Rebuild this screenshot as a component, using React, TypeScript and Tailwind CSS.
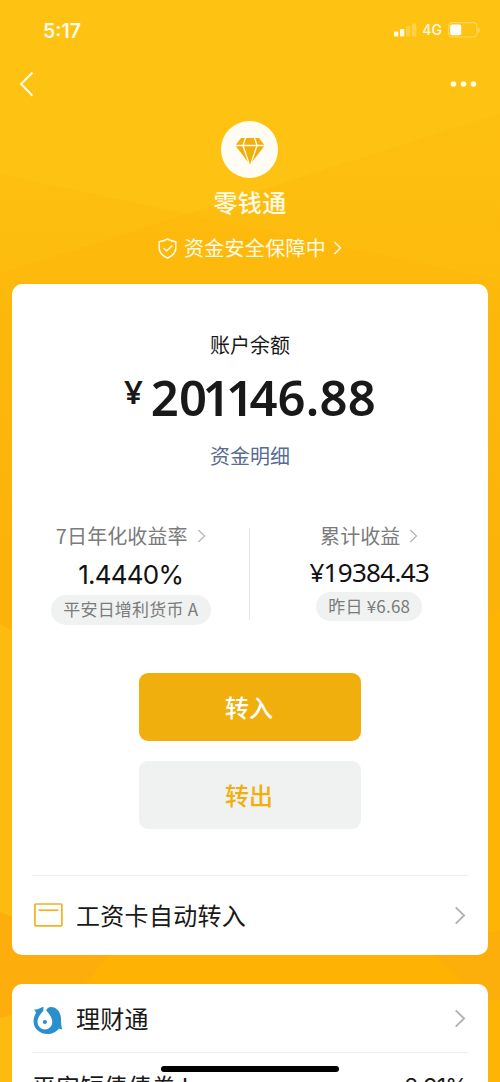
import { ReactNode } from 'react'

const cjk = "font-['Noto_Sans_CJK_SC',sans-serif]"
const num = "font-['Inter','Noto_Sans_CJK_SC',sans-serif]"
const money = "font-['Noto_Sans','Noto_Sans_CJK_SC',sans-serif]"

function Chevron({ className, width = 1.6 }: { className: string; width?: number }) {
  return (
    <svg className={className} viewBox="0 0 12 20" fill="none" stroke="currentColor" strokeWidth={width}>
      <path d="M1.5 1.5 10.3 10l-8.8 8.5" />
    </svg>
  )
}

function Background() {
  return (
    <svg className="absolute inset-0 h-full w-full" viewBox="0 0 500 1082" preserveAspectRatio="none">
      <defs>
        <linearGradient id="base" x1="0" y1="0" x2="0" y2="1">
          <stop offset="0" stopColor="#fec312" />
          <stop offset="0.15" stopColor="#fec312" />
          <stop offset="0.4" stopColor="#fdbd0f" />
          <stop offset="1" stopColor="#fdbc0e" />
        </linearGradient>
        <linearGradient id="fade" x1="0" y1="0" x2="0" y2="1">
          <stop offset="0" stopColor="#fcb60a" stopOpacity="0.28" />
          <stop offset="0.3" stopColor="#fcb409" stopOpacity="0.42" />
          <stop offset="1" stopColor="#fbb008" stopOpacity="0.6" />
        </linearGradient>
      </defs>
      <rect width="500" height="1082" fill="url(#base)" />
      <path d="M0 174 500 280V640H0Z" fill="url(#fade)" />
      <path d="M500 113 0 274V640H500Z" fill="url(#fade)" />
      <path d="M0 624 12 630V1082H0Z" fill="#fdbb10" />
      <path d="M500 610 480 625V1082H500Z" fill="#feb405" />
      <path d="M0 955H500V984H0Z" fill="#feb204" />
      <path d="M0 912 110 955 70 1000 0 1018Z" fill="#fdae0c" />
      <path d="M430 950 500 930V1000H480Z" fill="#fcae0b" />
    </svg>
  )
}

function StatusBar() {
  return (
    <div className={`flex h-[60px] items-center justify-between pl-[43px] pr-[20px] text-[#fffbe8] ${num}`}>
      <span className="pt-px text-[19.5px] font-semibold leading-6">5:17</span>
      <div className="flex items-center">
        <svg className="h-[14px] w-[23px]" viewBox="0 0 23 14" fill="currentColor">
          <rect x="0" y="8.5" width="4.3" height="5" rx="1" />
          <rect x="6" y="6" width="4.3" height="7.5" rx="1" />
          <rect x="12" y="3" width="4.3" height="10.5" rx="1" opacity="0.25" />
          <rect x="18" y="0.5" width="4.3" height="13" rx="1" opacity="0.25" />
        </svg>
        <span className="ml-[5px] text-[14px] font-medium leading-5">4G</span>
        <svg className="ml-[6px] h-[16px] w-[32px]" viewBox="0 0 32 16" fill="none">
          <rect x="0.6" y="0.6" width="28.4" height="14.4" rx="3.8" stroke="currentColor" strokeWidth="1.1" opacity="0.4" />
          <rect x="2.2" y="2.4" width="11" height="10.8" rx="1.8" fill="#fff" />
          <path d="M30.3 5.4c1.7.9 1.7 4.1 0 5Z" fill="currentColor" opacity="0.5" />
        </svg>
      </div>
    </div>
  )
}

function NavBar() {
  return (
    <div className="flex h-[48px] items-center justify-between pl-[19px] pr-[23px] text-[#fffbe8]">
      <svg className="h-[26px] w-[16px]" viewBox="0 0 16 26" fill="none" stroke="currentColor" strokeWidth="2">
        <path d="M13.6 1.5 2 13l11.6 11.7" />
      </svg>
      <svg className="h-[6px] w-[27px]" viewBox="0 0 27 6" fill="currentColor">
        <circle cx="3.5" cy="3" r="2.8" />
        <circle cx="13.5" cy="3" r="2.8" />
        <circle cx="23.5" cy="3" r="2.8" />
      </svg>
    </div>
  )
}

function Header() {
  return (
    <div className={`flex h-[176px] flex-col items-center pt-[13px] text-[#fffbe8] ${cjk}`}>
      <div className="mr-px flex h-[57px] w-[57px] items-center justify-center rounded-full bg-[#fffdf3]">
        <svg className="mt-[3px] h-[27px] w-[30px]" viewBox="0 0 30 27" fill="#efaf0c">
          <path d="M6 0H9.800L7.500 6.800H.8ZM11.200 0h7.600l2.300 6.800H8.900ZM20.200 0H24l5.200 6.800h-6.700ZM.8 8.200h6.700L13 24ZM8.900 8.200h12.200L15 26.500ZM22.500 8.200h6.700L17 24Z" />
        </svg>
      </div>
      <p className="mt-[9px] text-[24px] font-medium leading-[30px] tracking-[0.4px]">零钱通</p>
      <div className="mt-[17px] flex items-center">
        <svg className="h-[21px] w-[19px]" viewBox="0 0 19 21" fill="none" stroke="currentColor" strokeWidth="1.5">
          <path d="M9.5 1C12 2.4 14.5 3.3 17.8 3.7V10c0 5-3.500 8-8.300 10C4.700 18 1.200 15 1.200 10V3.700C4.500 3.300 7 2.400 9.500 1Z" strokeLinejoin="round" />
          <path d="m5.600 10 3 3 5.800-5.500" />
        </svg>
        <span className="ml-[7px] text-[20px] leading-[28px] tracking-[0.3px]">资金安全保障中</span>
        <Chevron className="ml-[7px] h-[14px] w-[9px]" width={2.2} />
      </div>
    </div>
  )
}

function Stat({ title, value, children }: { title: string; value: ReactNode; children: ReactNode }) {
  return (
    <div className="flex flex-1 flex-col items-center">
      <div className="flex h-[28px] items-center text-[#7b7b7b]">
        <span className="text-[20px] leading-[28px] tracking-[0.1px]">{title}</span>
        <Chevron className="ml-[9px] h-[14px] w-[9px] text-[#b5b5b5]" width={1.8} />
      </div>
      {value}
      {children}
    </div>
  )
}

function Row({ icon, text }: { icon: ReactNode; text: string }) {
  return (
    <div className="flex h-[68px] items-center pl-[1px] pr-[2px]">
      <div className="flex w-[43px] items-center">{icon}</div>
      <span className="flex-1 text-[24px] leading-[32px] tracking-[0.3px] text-[#191919]">{text}</span>
      <Chevron className="mt-px h-[19px] w-[12px] text-[#b2b2b2]" width={2} />
    </div>
  )
}

function CardIcon() {
  return (
    <svg className="h-[24px] w-[30px]" viewBox="0 0 30 24" fill="none" stroke="#f0b323" strokeWidth="1.7">
      <rect x="1.900" y="1" width="27" height="21.800" rx="1" />
      <path d="M5.500 7.200h19.800" />
    </svg>
  )
}

function FishIcon() {
  return (
    <svg className="mt-[4px] h-[29px] w-[30px]" viewBox="0 0 30 29" fill="#2a90cd">
      <path d="M1 3.500C4 4 6 2.500 10.500.7L10.300 5C7.500 8 4.500 11.500 4.500 16a7.400 7.400 0 0 0 14.800 0C19.300 12 16.500 8 13.500 5 13 2.500 16 1 18 1c6 0 10 5.500 10 12 0 4 .3 7 1.300 10.500l-3.300-1C23.500 26 19 28 14.500 28 6.500 28 .5 22.500.5 15c0-3 1-5.500 2.500-8C2.500 5.500 2 4.500 1 3.500Z" />
      <circle cx="11.900" cy="16" r="2.100" />
    </svg>
  )
}

export default function App() {
  return (
    <div className={`relative h-[1082px] w-[500px] overflow-hidden bg-[#fec312] ${cjk}`}>
      <Background />
      <div className="relative">
        <StatusBar />
        <NavBar />
        <Header />

        <div className="mx-[12px] h-[671px] rounded-[10px] bg-white px-[20px] pt-[47px]">
          <p className="text-center text-[20px] leading-[28px] text-[#191919]">账户余额</p>
          <div className={`mt-[8px] flex h-[58px] justify-center text-[#191919] ${money}`}>
            <span className="mr-[8px] mt-[3px] text-[33px] font-semibold leading-[44px]">¥</span>
            <span className="text-[49px] font-semibold leading-[60px] tracking-[0.2px]">
              2<span className="tracking-[-4.6px]">011</span>46.88
            </span>
          </div>
          <p className="mt-[17px] text-center text-[20px] leading-[28px] text-[#576b95]">资金明细</p>

          <div className="-mx-[20px] mt-[52px] flex h-[110px]">
            <Stat
              title="7日年化收益率"
              value={<p className={`mt-[9px] text-[26px] leading-[32px] tracking-[-0.8px] text-[#111] ${num}`}>1.4440%</p>}
            >
              <div className="mt-[4px] h-[30px] rounded-full bg-[#f0f2f1] px-[12.5px] text-[17px] leading-[28px] tracking-[0.2px] text-[#7b7b7b]">平安日增利货币 A</div>
            </Stat>
            <div className="-ml-px mr-px mt-[6px] h-[92px] w-px bg-[#e5e5e5]" />
            <Stat
              title="累计收益"
              value={<p className={`mt-[6px] text-[26px] leading-[32px] tracking-[-0.7px] text-[#111] ${money}`}>¥19384.43</p>}
            >
              <div className="mt-[4px] h-[29px] rounded-full bg-[#f0f2f1] px-[12px] text-[17px] leading-[27px] tracking-[0.2px] text-[#7b7b7b]">昨日 ¥6.68</div>
            </Stat>
          </div>

          <div className="mt-[41px] flex flex-col items-center gap-[20px] text-[24px] font-medium">
            <button className="h-[68px] w-[222px] rounded-[9px] bg-[#f0af0c] pr-[2px] text-white">转入</button>
            <button className="h-[68px] w-[222px] rounded-[9px] bg-[#f0f2f1] pr-[2px] text-[#f0af0c]">转出</button>
          </div>

          <div className="mt-[46px] border-t border-[#efefef] pt-[5px]">
            <Row icon={<CardIcon />} text="工资卡自动转入" />
          </div>
        </div>

        <div className="mx-[12px] mt-[29px] h-[200px] rounded-[10px] bg-white px-[20px]">
          <Row icon={<FishIcon />} text="理财通" />
          <div className="flex justify-between border-t border-[#efefef] pr-[1px] pt-[17px] text-[24px] leading-[32px] text-[#191919]">
            <span>平安短债债券 I</span>
            <span className={`pt-px text-[23px] tracking-[-0.8px] ${num}`}>2.91%</span>
          </div>
        </div>
      </div>
      <div className="absolute bottom-[10px] left-[161px] h-[6px] w-[178px] rounded-full bg-black" />
    </div>
  )
}
